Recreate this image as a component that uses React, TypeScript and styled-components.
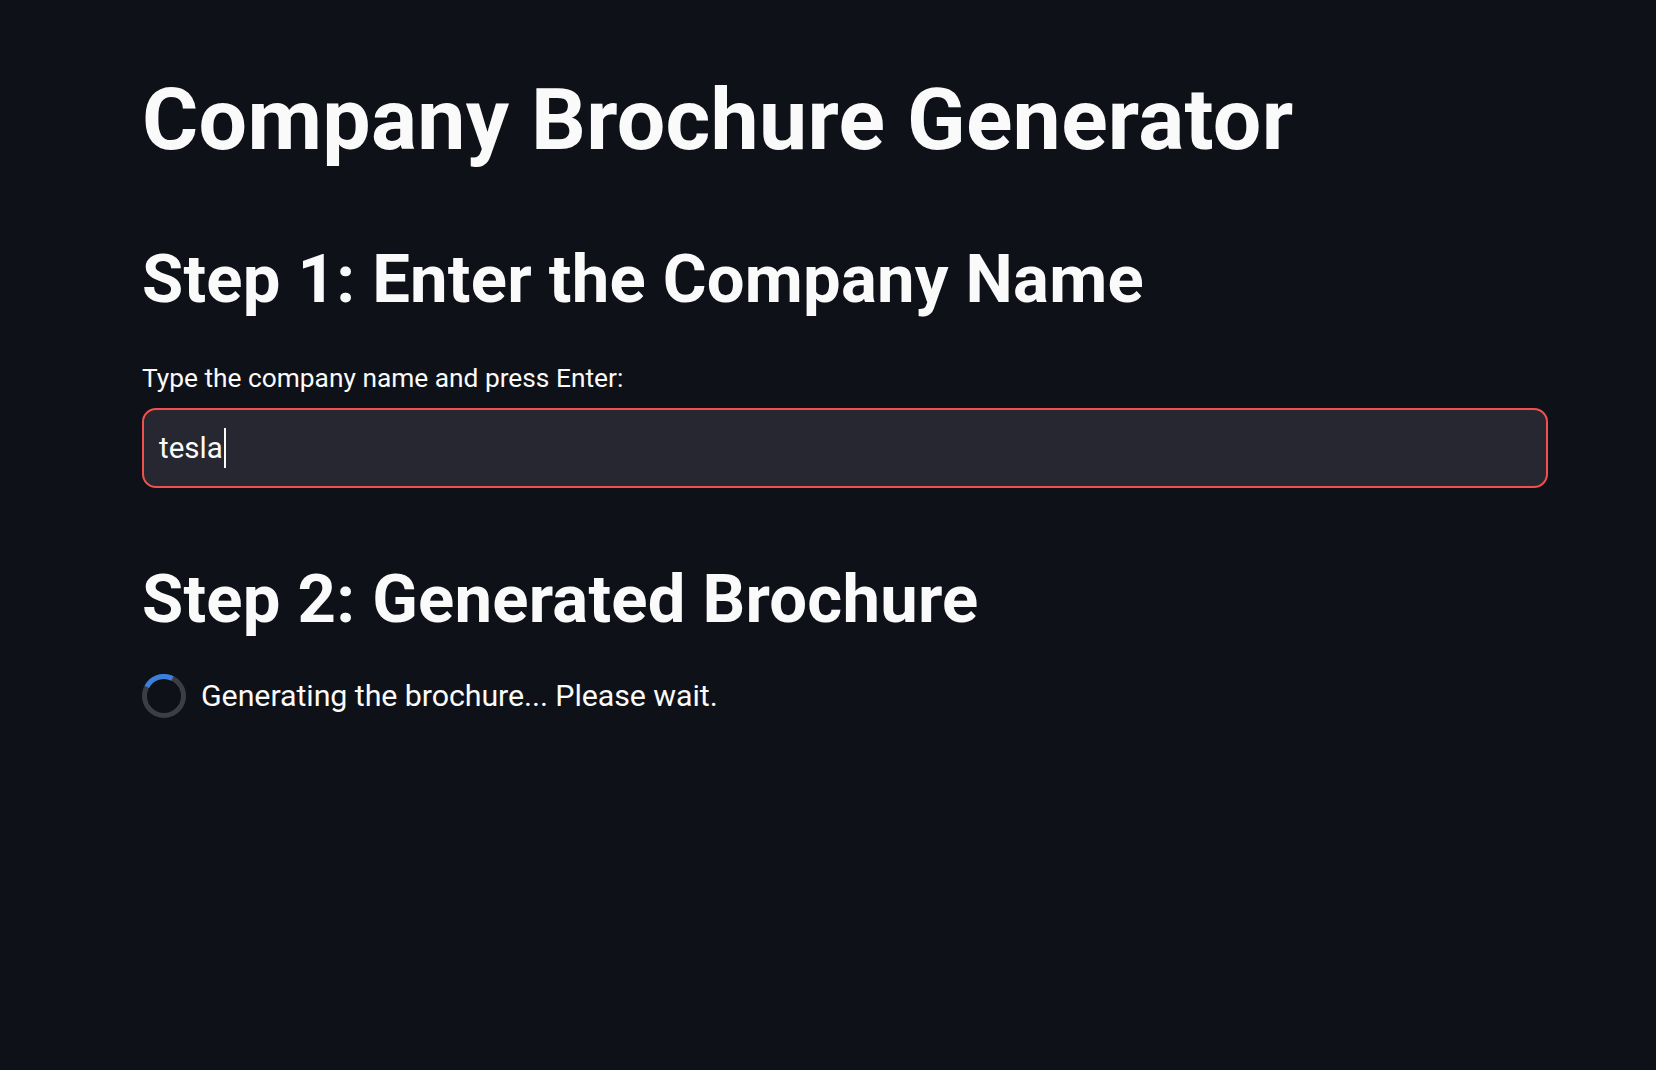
import React from "react";
import styled, { createGlobalStyle } from "styled-components";

const GlobalStyle = createGlobalStyle`
  html, body {
    margin: 0;
    padding: 0;
    background: #0e1117;
  }
  body {
    font-family: Roboto, "Liberation Sans", sans-serif;
    color: #fafafa;
  }
`;

const Page = styled.main`
  min-height: 1070px;
  box-sizing: border-box;
  padding: 68px 108px 0 142px;
  display: flex;
  flex-direction: column;
  align-items: stretch;
`;

const Title = styled.h1`
  margin: 0;
  font-size: 86px;
  line-height: 1.2;
  font-weight: 700;
  letter-spacing: 0.3px;
  color: #fafafa;
`;

const SectionHeading = styled.h2<{ $gap: number }>`
  margin: ${(p) => p.$gap}px 0 0;
  font-size: 67px;
  line-height: 1.2;
  font-weight: 700;
  letter-spacing: 0.22px;
  color: #fafafa;
`;

const Label = styled.label`
  display: block;
  margin-top: 39px;
  font-size: 26.3px;
  line-height: 1.5;
  font-weight: 400;
  color: #fafafa;
`;

const Field = styled.div`
  margin-top: 10px;
  height: 80px;
  box-sizing: border-box;
  border: 2px solid #f0514e;
  border-radius: 14px;
  background: #262730;
  display: flex;
  align-items: center;
  padding: 0 15px;
`;

const FieldText = styled.span`
  font-size: 29.5px;
  line-height: 36px;
  color: #fafafa;
`;

const Caret = styled.span`
  display: inline-block;
  width: 2px;
  height: 40px;
  margin-left: 1px;
  background: #fafafa;
`;

const StatusRow = styled.div`
  margin-top: 34px;
  display: flex;
  align-items: center;
  gap: 15px;
`;

const StatusText = styled.span`
  font-size: 30.4px;
  line-height: 1.5;
  letter-spacing: -0.08px;
  color: #fafafa;
`;

const SpinnerSvg = styled.svg`
  width: 44px;
  height: 44px;
  flex: none;
`;

function Spinner() {
  return (
    <SpinnerSvg viewBox="0 0 44 44">
      <circle cx="22" cy="22" r="19.5" fill="none" stroke="#3c3d45" strokeWidth="5" />
      <circle
        cx="22"
        cy="22"
        r="19.5"
        fill="none"
        stroke="#3a80dc"
        strokeWidth="5"
        strokeDasharray="29.6 200"
        transform="rotate(-152 22 22)"
      />
    </SpinnerSvg>
  );
}

export default function App() {
  return (
    <>
      <GlobalStyle />
      <Page>
        <Title>Company Brochure Generator</Title>
        <SectionHeading $gap={68}>Step 1: Enter the Company Name</SectionHeading>
        <Label>Type the company name and press Enter:</Label>
        <Field>
          <FieldText>tesla</FieldText>
          <Caret />
        </Field>
        <SectionHeading $gap={71}>Step 2: Generated Brochure</SectionHeading>
        <StatusRow>
          <Spinner />
          <StatusText>Generating the brochure... Please wait.</StatusText>
        </StatusRow>
      </Page>
    </>
  );
}
